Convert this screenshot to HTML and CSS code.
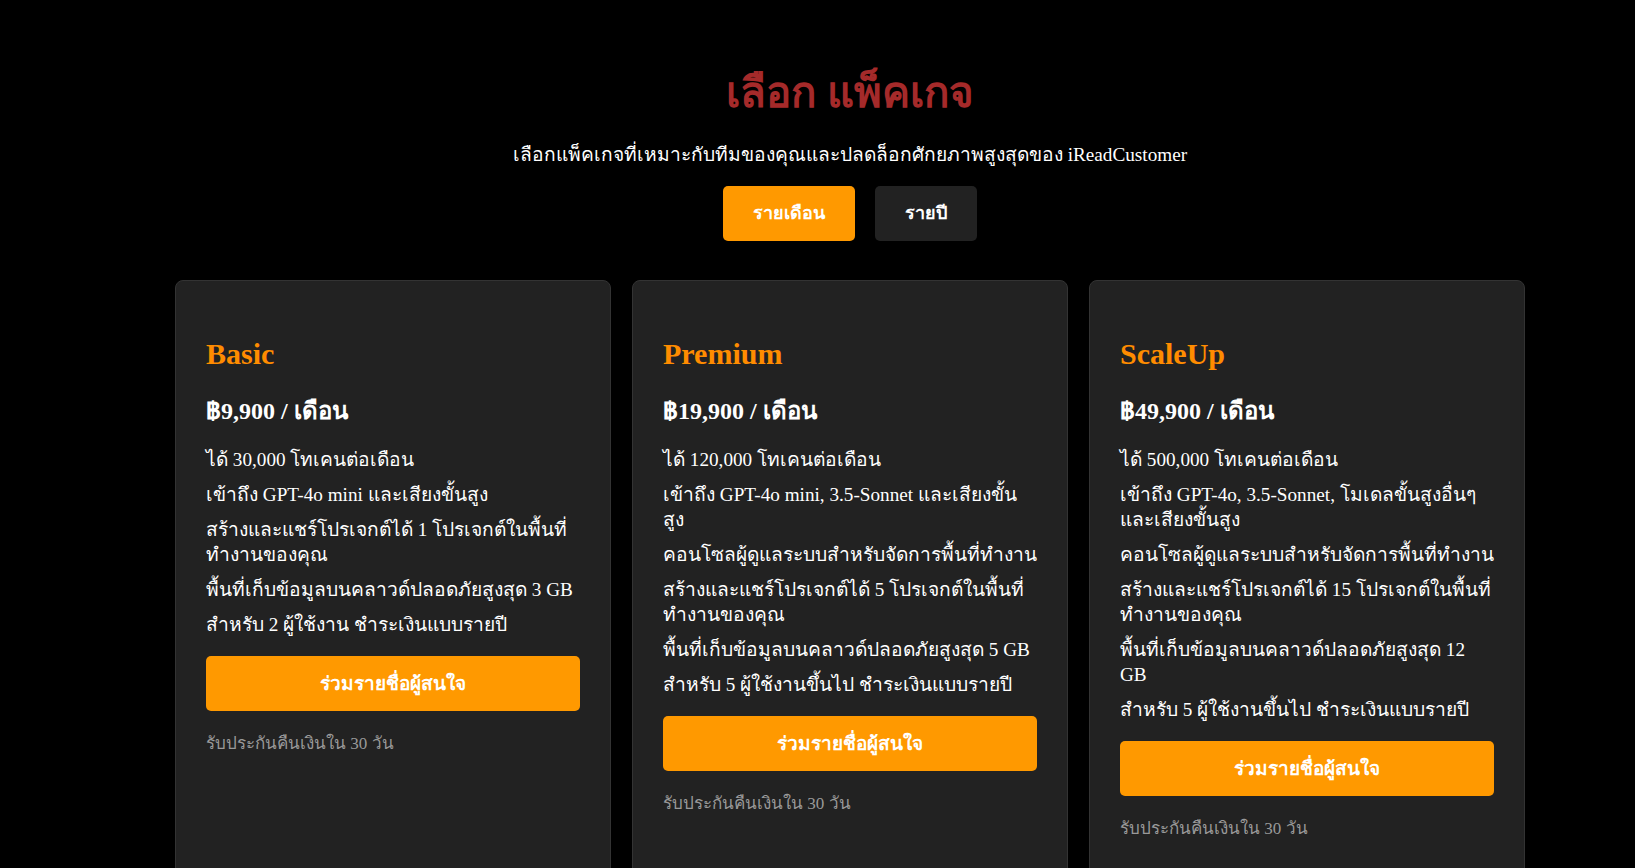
FILE: index.html
```html
<!DOCTYPE html>
<html>
<head>
<meta charset="utf-8">
<title>เลือก แพ็คเกจ</title>
<link rel="stylesheet" href="styles.css">
</head>
<body>
<main class="page">
  <h1 class="title">เลือก แพ็คเกจ</h1>
  <p class="subtitle">เลือกแพ็คเกจที่เหมาะกับทีมของคุณและปลดล็อกศักยภาพสูงสุดของ iReadCustomer</p>
  <div class="toggle">
    <button class="toggle-btn active">รายเดือน</button>
    <button class="toggle-btn">รายปี</button>
  </div>
  <section class="plans">
    <article class="card">
      <h2 class="plan-name">Basic</h2>
      <h3 class="price">฿9,900 / เดือน</h3>
      <ul class="features">
        <li>ได้ 30,000 โทเคนต่อเดือน</li>
        <li>เข้าถึง GPT-4o mini และเสียงขั้นสูง</li>
        <li>สร้างและแชร์โปรเจกต์ได้ 1 โปรเจกต์ในพื้นที่ทำงานของคุณ</li>
        <li>พื้นที่เก็บข้อมูลบนคลาวด์ปลอดภัยสูงสุด 3 GB</li>
        <li>สำหรับ 2 ผู้ใช้งาน ชำระเงินแบบรายปี</li>
      </ul>
      <button class="cta">ร่วมรายชื่อผู้สนใจ</button>
      <p class="note">รับประกันคืนเงินใน 30 วัน</p>
    </article>
    <article class="card">
      <h2 class="plan-name">Premium</h2>
      <h3 class="price">฿19,900 / เดือน</h3>
      <ul class="features">
        <li>ได้ 120,000 โทเคนต่อเดือน</li>
        <li>เข้าถึง GPT-4o mini, 3.5-Sonnet และเสียงขั้นสูง</li>
        <li>คอนโซลผู้ดูแลระบบสำหรับจัดการพื้นที่ทำงาน</li>
        <li>สร้างและแชร์โปรเจกต์ได้ 5 โปรเจกต์ในพื้นที่ทำงานของคุณ</li>
        <li>พื้นที่เก็บข้อมูลบนคลาวด์ปลอดภัยสูงสุด 5 GB</li>
        <li>สำหรับ 5 ผู้ใช้งานขึ้นไป ชำระเงินแบบรายปี</li>
      </ul>
      <button class="cta">ร่วมรายชื่อผู้สนใจ</button>
      <p class="note">รับประกันคืนเงินใน 30 วัน</p>
    </article>
    <article class="card">
      <h2 class="plan-name">ScaleUp</h2>
      <h3 class="price">฿49,900 / เดือน</h3>
      <ul class="features">
        <li>ได้ 500,000 โทเคนต่อเดือน</li>
        <li>เข้าถึง GPT-4o, 3.5-Sonnet, โมเดลขั้นสูงอื่นๆ และเสียงขั้นสูง</li>
        <li>คอนโซลผู้ดูแลระบบสำหรับจัดการพื้นที่ทำงาน</li>
        <li>สร้างและแชร์โปรเจกต์ได้ 15 โปรเจกต์ในพื้นที่ทำงานของคุณ</li>
        <li>พื้นที่เก็บข้อมูลบนคลาวด์ปลอดภัยสูงสุด 12 GB</li>
        <li>สำหรับ 5 ผู้ใช้งานขึ้นไป ชำระเงินแบบรายปี</li>
      </ul>
      <button class="cta">ร่วมรายชื่อผู้สนใจ</button>
      <p class="note">รับประกันคืนเงินใน 30 วัน</p>
    </article>
  </section>
</main>
</body>
</html>
```

FILE: styles.css
```css
html, body {
  margin: 0;
  background: #000;
  color: #fff;
  font-family: "Liberation Serif", serif;
}

.page {
  padding: 68px 0 60px 65px;
  text-align: center;
}

.title {
  margin: 0;
  font-size: 42px;
  line-height: 50px;
  font-weight: bold;
  color: #a52a2a;
}

.subtitle {
  margin: 24px 0 0;
  font-size: 19.2px;
  line-height: 25px;
}

.toggle {
  display: flex;
  justify-content: center;
  gap: 20px;
  margin-top: 19px;
}

.toggle-btn {
  font-family: "Liberation Serif", serif;
  font-size: 18px;
  font-weight: bold;
  line-height: 25px;
  padding: 15px 30px;
  border: none;
  border-radius: 5px;
  background: #222;
  color: #fff;
}

.toggle-btn.active {
  background: #ff9900;
}

.plans {
  display: grid;
  grid-template-columns: repeat(3, 436px);
  justify-content: center;
  gap: 21px;
  margin-top: 39px;
  text-align: left;
}

.card {
  background: #222;
  border: 1px solid #333;
  border-radius: 8px;
  padding: 30px 30px 60px;
}

.plan-name {
  margin: 25px 0;
  font-size: 30px;
  line-height: 35px;
  font-weight: bold;
  color: #ff8c00;
}

.price {
  margin: 0 0 21px;
  font-size: 24px;
  line-height: 30px;
  font-weight: bold;
}

.features {
  list-style: none;
  margin: 0;
  padding: 0;
  font-size: 19.2px;
  line-height: 25px;
}

.features li {
  margin-bottom: 10px;
}

.cta {
  display: block;
  width: 100%;
  margin-top: 19px;
  padding: 15px 0;
  border: none;
  border-radius: 5px;
  background: #ff9900;
  color: #fff;
  font-family: "Liberation Serif", serif;
  font-size: 19px;
  font-weight: bold;
  line-height: 25px;
}

.note {
  margin: 22px 0 0;
  font-size: 17px;
  line-height: 22px;
  color: #999;
}
```
